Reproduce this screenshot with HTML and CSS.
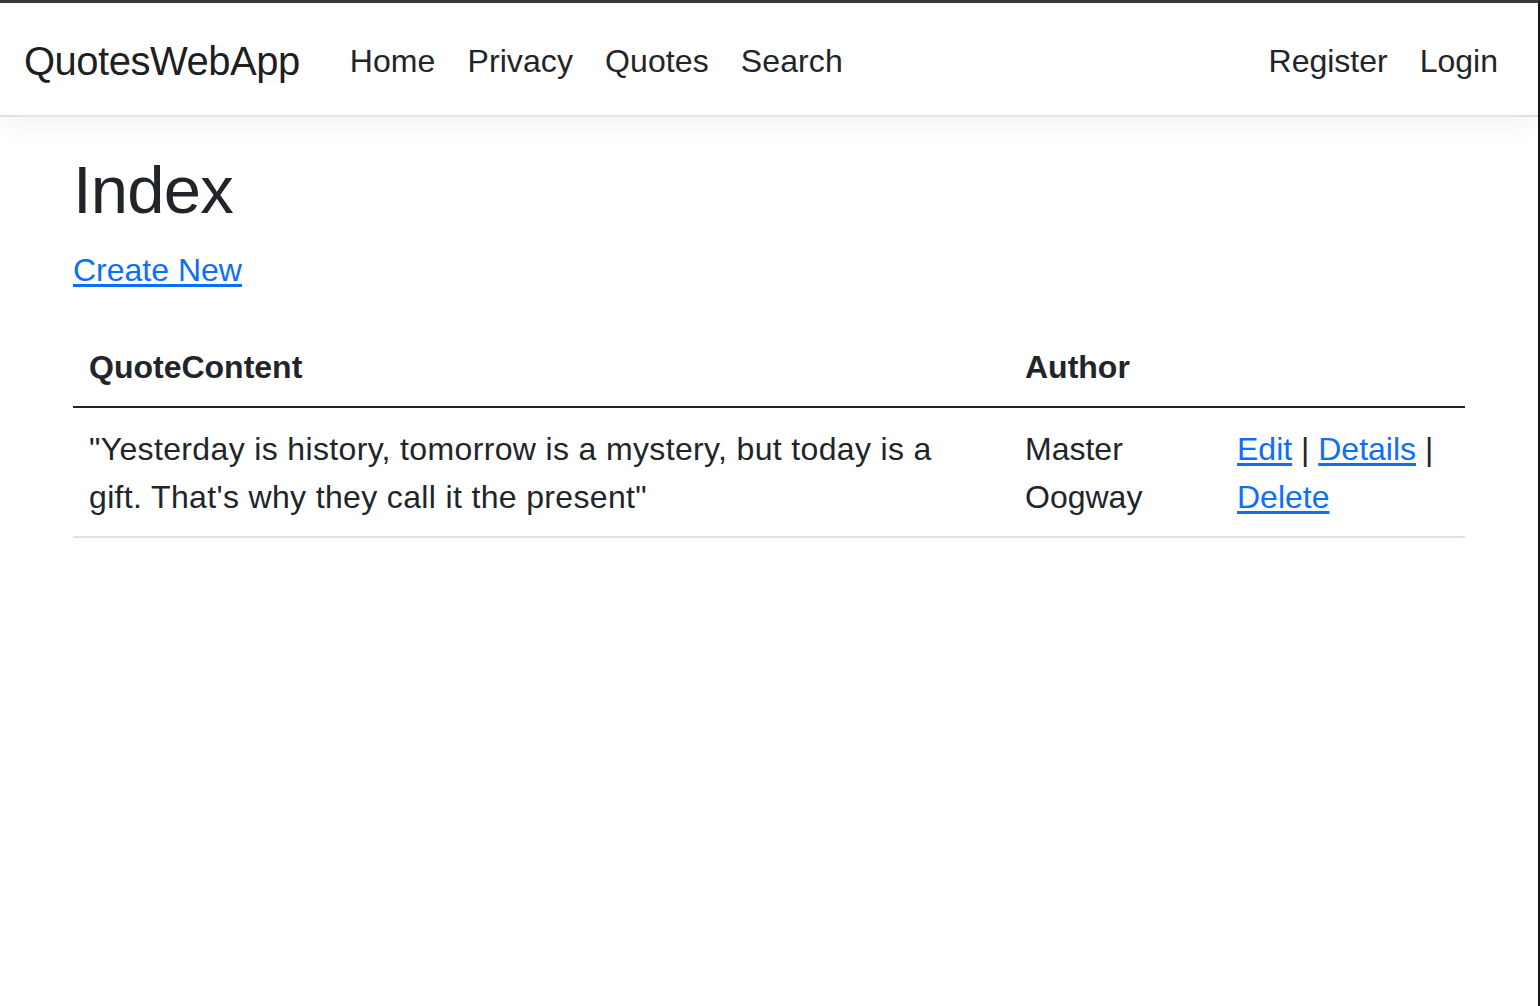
FILE: index.html
```html
<!DOCTYPE html>
<html lang="en">
<head>
<meta charset="utf-8">
<title>Index - QuotesWebApp</title>
<link rel="stylesheet" href="styles.css">
</head>
<body>
<div class="frame">
  <header class="navbar">
    <div class="nav-inner">
      <a class="brand" href="#">QuotesWebApp</a>
      <ul class="nav nav-main">
        <li><a class="nav-link" href="#">Home</a></li>
        <li><a class="nav-link" href="#">Privacy</a></li>
        <li><a class="nav-link" href="#">Quotes</a></li>
        <li><a class="nav-link" href="#">Search</a></li>
      </ul>
      <ul class="nav nav-right">
        <li><a class="nav-link" href="#">Register</a></li>
        <li><a class="nav-link" href="#">Login</a></li>
      </ul>
    </div>
  </header>
  <main class="container">
    <h1 class="title">Index</h1>
    <p class="create"><a class="link" href="#">Create New</a></p>
    <table class="table">
      <thead>
        <tr>
          <th class="col-quote">QuoteContent</th>
          <th class="col-author">Author</th>
          <th class="col-actions"></th>
        </tr>
      </thead>
      <tbody>
        <tr>
          <td class="quote">"Yesterday is history, tomorrow is a mystery, but today is a gift. That's why they call it the present"</td>
          <td>Master Oogway</td>
          <td><a class="link" href="#">Edit</a> | <a class="link" href="#">Details</a> | <a class="link" href="#">Delete</a></td>
        </tr>
      </tbody>
    </table>
  </main>
</div>
</body>
</html>
```
FILE: styles.css
```css
* { box-sizing: border-box; }
html, body { margin: 0; padding: 0; background: #fff; }
body {
  font-family: "Liberation Sans", Arial, sans-serif;
  font-size: 32px;
  line-height: 48px;
  color: #212529;
}
.frame {
  min-height: 100vh;
  border-top: 3px solid #3a3a3a;
  border-right: 2px solid #161616;
}
.navbar {
  background: #fff;
  border-bottom: 2px solid #dee2e6;
  box-shadow: 0 8px 24px rgba(0, 0, 0, 0.05);
  padding: 16px 0;
  margin-bottom: 33px;
}
.nav-inner {
  display: flex;
  align-items: center;
  padding: 0 24px;
}
.brand {
  font-size: 40px;
  line-height: 60px;
  padding: 12px 0 8px;
  margin-right: 34px;
  letter-spacing: -0.5px;
  color: rgba(0, 0, 0, 0.9);
  text-decoration: none;
}
.nav {
  display: flex;
  list-style: none;
  margin: 0;
  padding: 0;
}
.nav-main { flex: 1; }
.nav-main .nav-link { letter-spacing: 0.1px; }
.nav-link {
  display: block;
  padding: 18px 16px 14px;
  color: #212529;
  text-decoration: none;
}
.container {
  max-width: 1440px;
  margin: 0 auto;
  padding: 0 24px 32px;
}
.title {
  margin: 0 0 16px;
  font-size: 67px;
  line-height: 80px;
  font-weight: 500;
  letter-spacing: -0.8px;
}
.create { margin: 0 0 32px; }
.link { color: #0d6efd; text-decoration: underline; text-underline-offset: 3px; }
.table {
  width: 100%;
  border-collapse: collapse;
  margin-bottom: 32px;
  table-layout: fixed;
}
.table th, .table td {
  padding: 17px 16px 15px;
  text-align: left;
  vertical-align: top;
  border-bottom: 2px solid #dee2e6;
}
.table thead th {
  font-weight: bold;
  vertical-align: bottom;
  border-bottom: 2px solid #212529;
}
.quote { letter-spacing: 0.35px; }
.col-quote { width: 936px; }
.col-author { width: 212px; }
.col-actions { width: 244px; }
```
